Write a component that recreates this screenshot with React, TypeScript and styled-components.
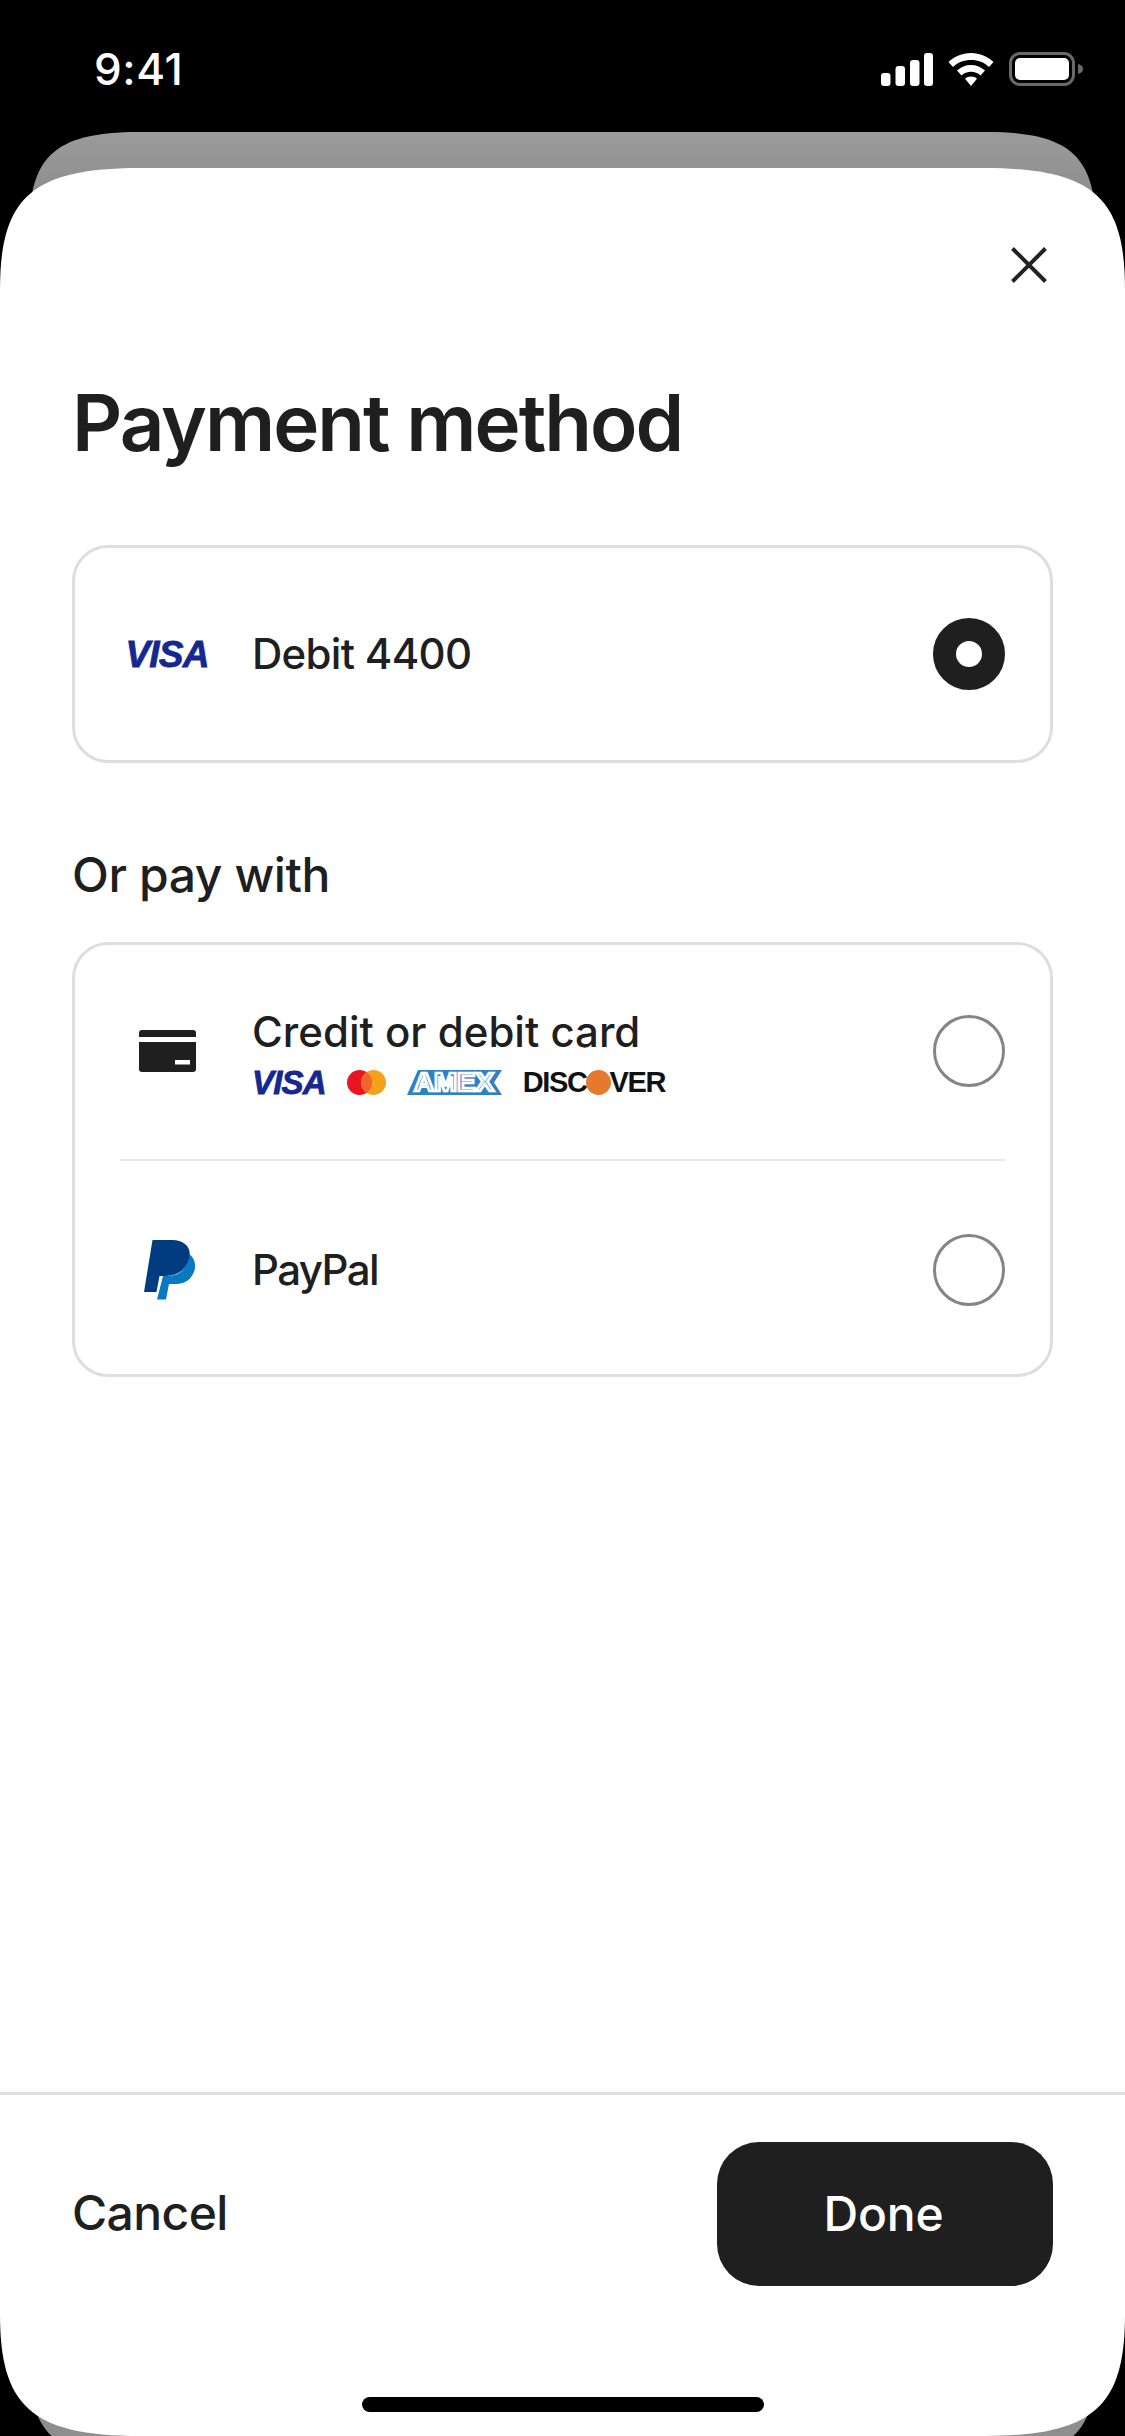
import styled, { createGlobalStyle } from 'styled-components'

const INK = '#1f1f1f'
const FONT = 'Inter, "Noto Sans", sans-serif'

// rounded corner with a long, soft shoulder, like the iOS sheets
function softRect(w: number, h: number, rx: number, ry: number) {
  const cx = rx * 0.21
  const cy = ry * 0.26
  return [
    `M0 ${ry}`,
    `C0 ${cy} ${cx} 0 ${rx} 0`,
    `H${w - rx}`,
    `C${w - cx} 0 ${w} ${cy} ${w} ${ry}`,
    `V${h - ry}`,
    `C${w} ${h - cy} ${w - cx} ${h} ${w - rx} ${h}`,
    `H${rx}`,
    `C${cx} ${h} 0 ${h - cy} 0 ${h - ry}`,
    'Z',
  ].join(' ')
}

const GlobalStyle = createGlobalStyle`
  html, body { margin: 0; padding: 0; background: #000; }
  * { box-sizing: border-box; }
`

const Screen = styled.div`
  position: relative;
  display: flex;
  flex-direction: column;
  width: 1125px;
  height: 2436px;
  overflow: hidden;
  background: #000;
  font-family: ${FONT};
  color: ${INK};
`

const BackSheet = styled.div`
  position: absolute;
  top: 132px;
  left: 29px;
  width: 1067px;
  height: 2326px;
  background: linear-gradient(#9b9b9b 0, #8e8e8e 60px, #8e8e8e 100%);
  clip-path: path('${softRect(1067, 2326, 110, 100)}');
`

const StatusBar = styled.div`
  position: relative;
  display: flex;
  align-items: flex-start;
  justify-content: space-between;
  height: 168px;
  padding: 45px 42px 0 94px;
  color: #fff;
`

const Time = styled.div`
  font-size: 44px;
  line-height: 48px;
  font-weight: 500;
  letter-spacing: 0.6px;
`

const StatusIcons = styled.div`
  display: flex;
  align-items: center;
  gap: 15px;
  padding-top: 7px;
`

const Sheet = styled.div`
  position: relative;
  flex: 1;
  display: flex;
  flex-direction: column;
  background: #fff;
  clip-path: path('${softRect(1125, 2268, 140, 122)}');
`

const CloseRow = styled.div`
  display: flex;
  justify-content: flex-end;
  padding: 79px 78px 0 0;
`

const CloseButton = styled.button`
  display: flex;
  width: 36px;
  height: 36px;
  padding: 0;
  border: 0;
  background: none;
`

const Content = styled.div`
  flex: 1;
  padding: 92px 72px 0;
`

const Title = styled.h1`
  margin: 0 0 74px;
  font-size: 78px;
  line-height: 96px;
  font-weight: 600;
  letter-spacing: -2px;
`

const SectionLabel = styled.h2`
  margin: 82px 0 37px;
  font-size: 48px;
  line-height: 60px;
  font-weight: 500;
  letter-spacing: -0.4px;
`

const Card = styled.div`
  padding: 0 45px;
  border: 3px solid #dedede;
  border-radius: 36px;
`

const Row = styled.div<{ $single?: boolean }>`
  display: flex;
  align-items: center;
  height: ${(p) => (p.$single ? 212 : 214)}px;

  &:not(:last-child) {
    padding-bottom: 3px;
  }

  & + & {
    height: 215px;
    padding-top: 4px;
    border-top: 2px solid #e9e9e9;
  }
`

const Slot = styled.div`
  display: flex;
  justify-content: center;
  flex: 0 0 132px;
  padding-right: 38px;
`

const RowBody = styled.div`
  flex: 1;
`

const RowText = styled.div<{ $tracking: number }>`
  font-size: 42px;
  line-height: 52px;
  font-weight: 500;
  letter-spacing: ${(p) => p.$tracking}px;
`

const Brands = styled.div`
  display: flex;
  align-items: center;
  height: 26px;
  margin-top: 12px;
`

const VisaMark = styled.span<{ $large?: boolean }>`
  font-family: 'Liberation Sans', sans-serif;
  font-style: italic;
  font-weight: 700;
  font-size: ${(p) => (p.$large ? 37 : 33)}px;
  line-height: 1;
  letter-spacing: -0.8px;
  color: #14288f;
  -webkit-text-stroke: 0.8px #14288f;
`

const Discover = styled.span`
  display: flex;
  align-items: center;
  margin-left: 21px;
  font-family: 'Liberation Sans', sans-serif;
  font-weight: 700;
  font-size: 29px;
  line-height: 1;
  letter-spacing: -1.4px;
  color: #111;
`

const DiscoverDot = styled.span`
  width: 25px;
  height: 25px;
  margin: 0 -1px;
  border-radius: 50%;
  background: #e5792d;
`

const BrandSvg = styled.svg<{ $gap: number }>`
  display: block;
  flex: none;
  margin-left: ${(p) => p.$gap}px;
  overflow: visible;
`

const Radio = styled.div<{ $on?: boolean }>`
  flex: none;
  width: 72px;
  height: 72px;
  border-radius: 50%;
  border: ${(p) => (p.$on ? `23px solid ${INK}` : '3px solid #858585')};
  background: #fff;
`

const Footer = styled.div`
  display: flex;
  align-items: flex-start;
  justify-content: space-between;
  height: 344px;
  padding: 47px 72px 0;
  border-top: 3px solid #dedede;
`

const CancelButton = styled.button`
  height: 142px;
  padding: 0;
  border: 0;
  background: none;
  font: 500 48px/60px ${FONT};
  letter-spacing: -0.6px;
  color: ${INK};
`

const DoneButton = styled.button`
  width: 336px;
  height: 144px;
  padding: 0 3px 0 0;
  border: 0;
  border-radius: 42px;
  background: ${INK};
  font: 500 48px/60px ${FONT};
  letter-spacing: -0.2px;
  color: #fff;
`

const HomeIndicator = styled.div`
  position: absolute;
  left: 362px;
  bottom: 24px;
  width: 402px;
  height: 15px;
  border-radius: 8px;
  background: #000;
`

const SignalIcon = () => (
  <svg width="52" height="33" viewBox="0 0 52 33" fill="#fff">
    <rect x="0" y="20" width="9.5" height="13" rx="3" />
    <rect x="14.5" y="13" width="9.5" height="20" rx="3" />
    <rect x="29" y="7" width="9.5" height="26" rx="3" />
    <rect x="43" y="0" width="9" height="33" rx="3" />
  </svg>
)

const WifiIcon = () => (
  <svg width="46" height="33" viewBox="0 0 46 33" fill="#fff">
    <path d="M23 0C14 0 6.500 3.500 0.500 9L5 14C9.500 9.500 16 7 23 7S36.500 9.500 41 14L45.500 9C39.500 3.500 32 0 23 0Z" />
    <path d="M23 12C17.500 12 13 14 9 17.500L13.500 22.500C16 20 19.500 18.800 23 18.800S30 20 32.500 22.500L37 17.500C33 14 28.500 12 23 12Z" />
    <path d="M23 23.500C20.500 23.500 18.500 24.300 17 25.800L23 33L29 25.800C27.500 24.300 25.500 23.500 23 23.500Z" />
  </svg>
)

const BatteryIcon = () => (
  <svg width="74" height="34" viewBox="0 0 74 34" fill="none">
    <rect x="1.500" y="1.500" width="63" height="31" rx="9.500" stroke="#6a6a6a" strokeWidth="3" />
    <rect x="6" y="6" width="54" height="22" rx="5" fill="#fff" />
    <path d="M69 12C72 12.800 74 14.500 74 17S72 21.200 69 22Z" fill="#6a6a6a" />
  </svg>
)

const CloseIcon = () => (
  <svg width="36" height="36" viewBox="0 0 36 36" fill="none" stroke="#222" strokeWidth="4">
    <path d="M1.500 1.500L34.500 34.500M34.500 1.500L1.500 34.500" />
  </svg>
)

const CardIcon = () => (
  <svg width="57" height="42" viewBox="0 0 57 42" fill={INK}>
    <path d="M3 0H54A3 3 0 0 1 57 3V7H0V3A3 3 0 0 1 3 0Z" />
    <path fillRule="evenodd" d="M0 12H57V39A3 3 0 0 1 54 42H3A3 3 0 0 1 0 39ZM36 30V34.500H51V30Z" />
  </svg>
)

const PayPalIcon = () => (
  <svg width="58" height="60" viewBox="-6 0 58 60">
    <path
      fill="#0b78c2"
      d="M45 14C52 19 52.500 28 49 34C45 42 38 44 31 44H25L22 59.500H13L19 36H24C36 36 44 28 45 14Z"
    />
    <path
      fill="#013c80"
      d="M8.500 0H28C40 0 47 7 45.500 16C43.500 29 34 36 22 36H15.500L12.500 52H0Z"
    />
  </svg>
)

const MastercardMark = () => (
  <BrandSvg $gap={21} width="39" height="25" viewBox="0 0 39 25">
    <circle cx="12.500" cy="12.500" r="12.500" fill="#e9161f" />
    <circle cx="26.500" cy="12.500" r="12.500" fill="#f6a11c" />
    <path d="M19.500 2.100A12.500 12.500 0 0 1 19.500 22.900A12.500 12.500 0 0 1 19.500 2.100Z" fill="#f0652a" />
  </BrandSvg>
)

const AmexMark = () => (
  <BrandSvg $gap={21} width="95" height="25" viewBox="0 0 95 25">
    <path d="M11 0H95L87 12.500L95 25H0Z" fill="#2f80c4" />
    <text
      x="47"
      y="21"
      textAnchor="middle"
      textLength="80"
      lengthAdjust="spacingAndGlyphs"
      fontFamily="Liberation Sans, sans-serif"
      fontWeight="700"
      fontSize="25"
      fill="#2f80c4"
      stroke="#fff"
      strokeWidth="2.500"
    >
      AMEX
    </text>
  </BrandSvg>
)

export default function App() {
  return (
    <Screen>
      <GlobalStyle />
      <BackSheet />
      <StatusBar>
        <Time>9:41</Time>
        <StatusIcons>
          <SignalIcon />
          <WifiIcon />
          <BatteryIcon />
        </StatusIcons>
      </StatusBar>
      <Sheet>
        <CloseRow>
          <CloseButton aria-label="Close">
            <CloseIcon />
          </CloseButton>
        </CloseRow>
        <Content>
          <Title>Payment method</Title>
          <Card>
            <Row $single>
              <Slot>
                <VisaMark $large>VISA</VisaMark>
              </Slot>
              <RowBody>
                <RowText $tracking={-0.7}>Debit 4400</RowText>
              </RowBody>
              <Radio $on />
            </Row>
          </Card>
          <SectionLabel>Or pay with</SectionLabel>
          <Card>
            <Row>
              <Slot>
                <CardIcon />
              </Slot>
              <RowBody>
                <RowText $tracking={0}>Credit or debit card</RowText>
                <Brands>
                  <VisaMark>VISA</VisaMark>
                  <MastercardMark />
                  <AmexMark />
                  <Discover>
                    DISC
                    <DiscoverDot />
                    VER
                  </Discover>
                </Brands>
              </RowBody>
              <Radio />
            </Row>
            <Row>
              <Slot>
                <PayPalIcon />
              </Slot>
              <RowBody>
                <RowText $tracking={-1.6}>PayPal</RowText>
              </RowBody>
              <Radio />
            </Row>
          </Card>
        </Content>
        <Footer>
          <CancelButton>Cancel</CancelButton>
          <DoneButton>Done</DoneButton>
        </Footer>
        <HomeIndicator />
      </Sheet>
    </Screen>
  )
}
